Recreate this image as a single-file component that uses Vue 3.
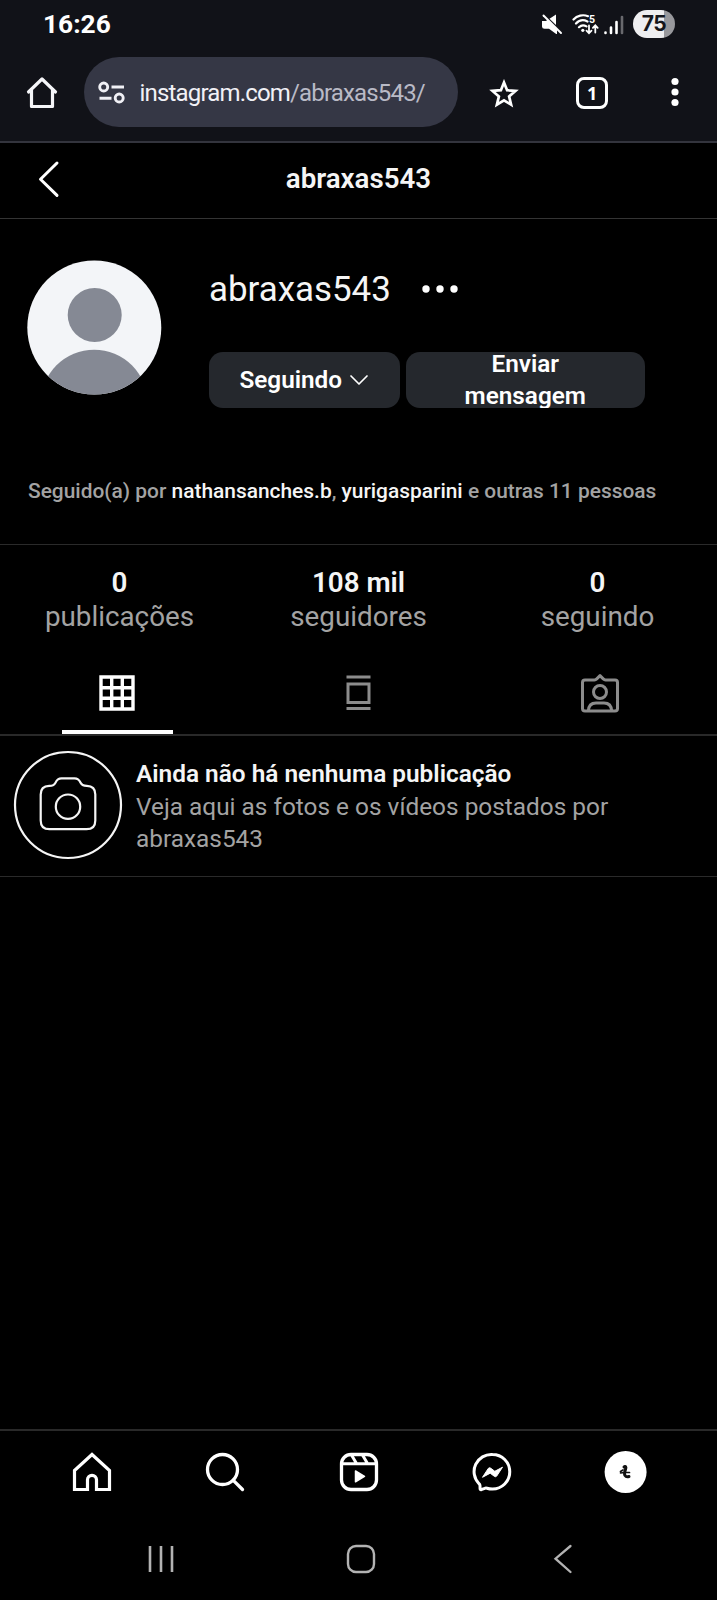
<script setup>
const stats = [
  { value: '0', label: 'publicações' },
  { value: '108 mil', label: 'seguidores' },
  { value: '0', label: 'seguindo' },
]
</script>

<template>
  <div class="phone">
    <div class="chrome">
      <div class="status">
        <span class="time">16:26</span>
        <div class="indicators">
          <svg class="mute" width="22" height="22" viewBox="0 0 22 22">
            <path d="M1 7h4l1.500-1.200L16 15.500V20l-.8 0L8 14.800H3.500Q1 14.800 1 12.500Z" fill="#fff" />
            <path d="M8.500 4.800 15 .6V11Z" fill="#fff" />
            <path d="M2.500 1.500 20 19" stroke="#fff" stroke-width="2" stroke-linecap="round" />
          </svg>
          <svg class="wifi" width="27" height="22" viewBox="0 0 27 22" fill="none" stroke="#fff" stroke-width="2.200" stroke-linecap="round">
            <path d="M1.500 5.500C5 1.500 11 .2 16 2.200M4 9.500c3-3.200 7.500-4 11.500-2M7 13.200c2-2 5-2.300 7.500-.8" />
            <circle cx="10.800" cy="16.300" r="1.600" fill="#fff" stroke="none" />
            <path d="M17 11.500V19m-2.500-2.300L17 19.300l2.500-2.600M23.300 18.500v-7m-2.400 2.400 2.400-2.600 2.400 2.600" stroke-width="1.800" />
            <text x="17" y="8.800" fill="#fff" stroke="none" font-family="Roboto, sans-serif" font-weight="700" font-size="10.500">5</text>
          </svg>
          <svg class="signal" width="20" height="20" viewBox="0 0 20 20" stroke-width="2.600" stroke-linecap="round">
            <path d="M1.500 17.500v.5M7 12.500v5.500M12.500 7v11" stroke="#fff" />
            <path d="M18 2v16" stroke="#69696d" />
          </svg>
          <div class="battery"><span>75</span></div>
        </div>
      </div>
      <div class="toolbar">
        <svg class="c-home" width="32" height="33" viewBox="0 0 32 33" fill="none" stroke="#f5f5f8" stroke-width="3.200" stroke-linejoin="round" stroke-linecap="round">
          <path d="M2.500 16 16 3l13.500 13M5.500 14V30.500h21V14" />
        </svg>
        <div class="pill">
          <svg width="27" height="23" viewBox="0 0 27 23" fill="none" stroke="#f0f0f5" stroke-width="2.900">
            <circle cx="5.700" cy="6" r="4" /><path d="M13.500 6H26M1.500 17.200h12" /><circle cx="21.200" cy="17" r="4" />
          </svg>
          <div class="url">instagram.com<span>/abraxas543/</span></div>
        </div>
        <svg class="star" width="30" height="30" viewBox="0 0 30 30" fill="none" stroke="#fff" stroke-width="2.700">
          <path d="m15 3.500 3.100 7.700 8.400.7-6.400 5.500 2 8.300-7.100-4.400-7.100 4.400 2-8.300-6.400-5.500 8.400-.7Z" />
        </svg>
        <div class="tabs-count">1</div>
        <svg class="kebab" width="8" height="30" viewBox="0 0 8 30" fill="#fff"><circle cx="4" cy="4.500" r="3.600" /><circle cx="4" cy="15" r="3.600" /><circle cx="4" cy="25.500" r="3.600" /></svg>
      </div>
    </div>

    <header class="page-head">
      <svg class="back" width="22" height="38" viewBox="0 0 22 38" fill="none" stroke="#fff" stroke-width="3" stroke-linecap="round" stroke-linejoin="round"><path d="M19 3 2.500 19.200 19 35.400" /></svg>
      <h1>abraxas543</h1>
    </header>

    <section class="profile">
      <svg class="avatar" width="135" height="135" viewBox="0 0 135 135">
        <defs><clipPath id="disc"><circle cx="67.300" cy="67.500" r="67" /></clipPath></defs>
        <circle cx="67.300" cy="67.500" r="67" fill="#f3f5f8" />
        <g clip-path="url(#disc)" fill="#858994"><circle cx="67.700" cy="55" r="27" /><circle cx="67.200" cy="143" r="53.300" /></g>
      </svg>
      <div class="info">
        <div class="name-row">
          <h2>abraxas543</h2>
          <svg width="38" height="10" viewBox="0 0 38 10" fill="#fff"><circle cx="5" cy="5" r="3.700" /><circle cx="19" cy="5" r="3.700" /><circle cx="33" cy="5" r="3.700" /></svg>
        </div>
        <div class="actions">
          <button class="following"><span>Seguindo</span>
            <svg width="20" height="12" viewBox="0 0 20 12" fill="none" stroke="#fff" stroke-width="1.700" stroke-linecap="round" stroke-linejoin="round"><path d="m2 2 8 8 8-8" /></svg>
          </button>
          <button class="message"><span>Enviar<br>mensagem</span></button>
        </div>
      </div>
    </section>

    <p class="followed">Seguido(a) por <b>nathansanches.b</b>, <b>yurigasparini</b> e outras 11 pessoas</p>

    <ul class="stats">
      <li v-for="s in stats" :key="s.label"><b>{{ s.value }}</b><span>{{ s.label }}</span></li>
    </ul>

    <nav class="tabs">
      <div class="tab active">
        <svg width="36" height="36" viewBox="0 0 36 36" fill="none" stroke="#fff" stroke-width="3.400"><path d="M2 2h32v32H2ZM12.700 2v32M23.300 2v32M2 12.700h32M2 23.300h32" /></svg>
      </div>
      <div class="tab">
        <svg width="25" height="36" viewBox="0 0 25 36" fill="none" stroke="#8c8c8c" stroke-width="3"><path d="M.5 2h24M.5 33.500h24M2 9h21v18.500H2Z" /></svg>
      </div>
      <div class="tab tagged">
        <svg width="40" height="40" viewBox="0 0 40 40" fill="none" stroke="#8c8c8c" stroke-width="3" stroke-linejoin="round">
          <path d="M5 7h9.500q1.200 0 2-.9L20 2.700l3.500 3.400q.8.900 2 .9H35q2.500 0 2.500 2.500v26q0 2.500-2.500 2.500H5q-2.500 0-2.500-2.500v-26Q2.500 7 5 7Z" />
          <circle cx="20" cy="19" r="6.500" /><path d="M8.300 38c.3-5.500 3.500-8 7.700-8h8c4.200 0 7.400 2.500 7.700 8" />
        </svg>
      </div>
    </nav>

    <section class="empty">
      <svg width="110" height="110" viewBox="0 0 110 110" fill="none" stroke="#f5f5f5" stroke-width="2.200">
        <circle cx="55" cy="55" r="53" /><circle cx="55" cy="56.700" r="12.200" />
        <path d="M36.500 79.200q-8.800 0-8.800-8.800V44.500q0-8.500 8.500-8.600 5 0 6.500-3.600 1.700-4 5.800-4h13q4.100 0 5.800 4 1.500 3.600 6.500 3.600 8.500.1 8.500 8.600v25.900q0 8.800-8.800 8.800Z" />
      </svg>
      <div class="empty-text">
        <b>Ainda não há nenhuma publicação</b>
        <p>Veja aqui as fotos e os vídeos postados por<br>abraxas543</p>
      </div>
    </section>

    <footer class="dock">
      <nav class="app-nav">
        <svg width="44" height="44" viewBox="0 0 44 44" fill="none" stroke="#fff" stroke-width="3.200" stroke-linejoin="miter"><path d="M17.500 39.500H4.500V20.500L22 4.500l17.500 16v19h-13V29.800a4.500 4.500 0 0 0-9 0Z" /></svg>
        <svg width="44" height="44" viewBox="0 0 44 44" fill="none" stroke="#fff" stroke-width="3.300" stroke-linecap="round"><circle cx="19.500" cy="19.500" r="15" /><path d="M30.300 30.300 39.500 39.500" /></svg>
        <svg width="44" height="44" viewBox="0 0 44 44" fill="none" stroke="#fff" stroke-width="3.300" stroke-linejoin="round">
          <rect x="4.500" y="4.500" width="35" height="35" rx="9.500" /><path d="M5 13.700h34M14.500 5l5 8.500M25.500 5l5 8.500" stroke-width="3" /><path d="m18.500 21 9 5.400-9 5.400Z" fill="#fff" stroke-width="1.500" />
        </svg>
        <svg width="44" height="44" viewBox="0 0 44 44" fill="none" stroke="#fff" stroke-width="3" stroke-linejoin="round">
          <path d="M22.500 4.500a17.200 17.200 0 0 1 0 34.500q-3 0-5.500-.8-1.200-.4-2.300.1l-3.500 1.400q-1 .3-1.100-.8l-.1-3.200q-.1-1.200-1-2A17.200 17.200 0 0 1 22.500 4.500Z" />
          <path d="m12.500 27.300 5.800-8.900q1-1.100 2.200-.3l4.300 3.200 7.700-4.100-5.800 8.900q-1 1.100-2.200.3l-4.300-3.200Z" fill="#fff" stroke-width="1" />
        </svg>
        <svg width="44" height="44" viewBox="0 0 44 44"><circle cx="21.600" cy="22" r="21" fill="#fff" /><g fill="none" stroke="#111" stroke-linecap="round"><path d="M20 17c1.500-1.500 2.500 0 1.500 2.500s-1.500 4.500-.5 6 2.500 1.500 4 1" stroke-width="3" /><path d="m16.500 21.500 2.500-1.500m-2.500 3 4-.5 5 0" stroke-width="1.700" /></g></svg>
      </nav>
      <div class="system-nav">
        <svg width="28" height="30" viewBox="0 0 28 30" stroke="#b3b3b3" stroke-width="2.600"><path d="M3 2v26M14 2v26M25 2v26" /></svg>
        <svg class="sys-home" width="30" height="30" viewBox="0 0 30 30" fill="none" stroke="#b3b3b3" stroke-width="2.400"><rect x="2" y="2" width="26" height="26" rx="8" /></svg>
        <svg width="20" height="30" viewBox="0 0 20 30" fill="none" stroke="#b3b3b3" stroke-width="2.300" stroke-linecap="round"><path d="M17.500 2 2.500 14.700l15 13.300" /></svg>
      </div>
    </footer>
  </div>
</template>

<style>
body { background: #000; }
</style>
<style scoped>
* { box-sizing: border-box; }
.phone { width: 717px; height: 1600px; display: flex; flex-direction: column; background: #000; color: #f5f5f5; font-family: Roboto, "Noto Sans", sans-serif; overflow: hidden; }
svg { display: block; flex: none; }
h1, h2, p, ul { margin: 0; padding: 0; font-weight: 400; }
.chrome { height: 143px; background: #111218; border-bottom: 2px solid #33343d; flex: none; }
.status { height: 48px; padding: 0 42px 0 43px; display: flex; justify-content: space-between; align-items: center; }
.time { font: 700 26.300px/48px Roboto, sans-serif; color: #fff; }
.indicators { display: flex; align-items: center; }
.mute { margin-top: 1px; }
.wifi { margin: 1px 0 0 9px; }
.signal { margin: 1px 0 0 5px; }
.battery { width: 42px; height: 28px; margin-left: 9.500px; border-radius: 14px; background: linear-gradient(90deg, #eeeef0 31px, #98989c 31px); color: #15161b; text-align: center; font: 700 21px/28px Inter, sans-serif; letter-spacing: -.5px; }
.toolbar { height: 93px; padding: 9px 38px 14px 26px; display: flex; align-items: center; }
.pill { width: 376px; height: 70px; margin-left: 25.500px; border-radius: 35px; background: #353745; display: flex; align-items: center; padding-left: 14px; }
.url { margin: 1px 0 0 15px; font-size: 24px; letter-spacing: -.83px; color: #f1f1f6; white-space: nowrap; }
.url span { color: #b9bac6; }
.star { margin: 3px 0 0 31px; }
.tabs-count { width: 32px; height: 32px; margin: 1px 0 0 57px; border: 3px solid #fff; border-radius: 8px; text-align: center; font: 700 18px/26px "Open Sans", sans-serif; color: #fff; }
.kebab { margin-left: 63px; }
.page-head { height: 76px; border-bottom: 1px solid #343434; display: flex; align-items: center; padding: 0 0 4px 38px; flex: none; }
.page-head h1 { flex: 1; margin-right: 60px; text-align: center; font: 600 27.700px/32px Roboto, sans-serif; }
.profile { display: flex; padding: 41px 27px 0; height: 236px; flex: none; }
.info { margin-left: 47px; padding-top: 6px; }
.name-row { display: flex; align-items: center; height: 46px; }
.name-row h2 { font-size: 34.900px; line-height: 46px; margin: 1px 30px 0 0; }
.actions { display: flex; gap: 6.500px; margin-top: 40px; }
button { height: 56px; border: 0; padding: 0; border-radius: 14px; background: #25282d; color: #fff; font: 600 24.300px/32px Roboto, sans-serif; display: flex; align-items: center; justify-content: center; overflow: hidden; }
.following { width: 190.500px; gap: 7px; }
.message { width: 238.500px; }
.followed { height: 90px; padding: 23px 28px 0; border-bottom: 1px solid #2a2a2a; font: 500 20.920px/26px Roboto, sans-serif; color: #a3a3a3; white-space: nowrap; flex: none; }
.followed b { color: #f5f5f5; font-weight: 500; }
.stats { display: flex; list-style: none; padding-top: 20px; height: 117px; flex: none; }
.stats li { width: 239px; text-align: center; font-size: 27.800px; color: #a3a3a3; }
.stats b, .stats span { display: block; line-height: 35px; }
.stats span { line-height: 34px; }
.stats b { color: #f5f5f5; font-weight: 600; }
.tabs { height: 74px; border-bottom: 2px solid #292929; display: flex; flex: none; }
.tab { width: 239px; display: flex; justify-content: center; align-items: center; padding-bottom: 10px; }
.active { width: 111px; margin: 0 66px 0 62px; border-bottom: 4px solid #fff; padding: 0 1px 6px 0; }
.tagged { padding-left: 4px; }
.empty { height: 141px; padding: 14px 13px 0; border-bottom: 1px solid #2a2a2a; display: flex; flex: none; }
.empty-text { margin-left: 13px; padding-top: 8px; font-size: 24.390px; line-height: 32px; color: #a3a3a3; white-space: nowrap; }
.empty-text p { padding-top: 1px; }
.empty-text b { color: #f5f5f5; font-weight: 600; }
.dock { margin-top: auto; border-top: 2px solid #292929; height: 171px; flex: none; }
.app-nav { height: 82px; padding: 0 69.500px 0 70px; display: flex; justify-content: space-between; align-items: center; }
.system-nav { height: 87px; padding: 31px 144px 0 147px; display: flex; justify-content: space-between; }
.sys-home { margin-right: 7px; }
</style>
